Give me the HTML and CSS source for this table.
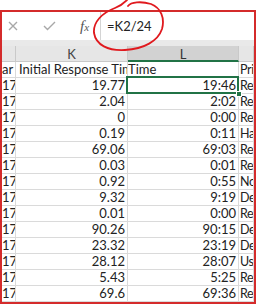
FILE: index.html
```html
<!DOCTYPE html>
<html lang="en">
<head>
    <meta charset="UTF-8">
    <meta name="viewport" content="width=device-width, initial-scale=1.0">
    <title>Response times</title>
    <link rel="stylesheet" href="styles.css">
</head>
<body>
    <!-- hand drawn ring around the formula -->
    <svg class="ring" width="257" height="60" viewBox="0 0 257 60">
        <path d="M128 6 C131 2, 141 1, 151 4 C161 8, 165 18, 162 29 C158 41, 144 49, 125 50 C108 51, 96 45, 94 33 C93 22, 102 13, 115 8 C120 6, 124 3, 127 0"/>
    </svg>

    <div class="sheet">
        <div class="formula-bar">
            <div class="fb-tools">
                <svg class="ico-x" width="10" height="10" viewBox="0 0 10 10"><path d="M1 1 L9 9 M9 1 L1 9"/></svg>
                <svg class="ico-ok" width="13" height="10" viewBox="0 0 13 10"><path d="M1 5 L4.5 8.5 L12 1"/></svg>
                <span class="fx">f<span>x</span></span>
            </div>
            <div class="fb-input">=K2/24</div>
        </div>
        <div class="strip"></div>

        <div class="grid">
            <div class="hd"></div>
            <div class="hd">K</div>
            <div class="hd on">L</div>
            <div class="hd"></div>

            <div class="c">ar</div>
            <div class="c title">Initial Response Time</div>
            <div class="c">Time</div>
            <div class="c side">Pri</div>

            <div class="c">17</div><div class="c num">19.77</div><div class="c num sel">19:46</div><div class="c side">Re</div>
            <div class="c">17</div><div class="c num">2.04</div><div class="c num">2:02</div><div class="c side">Re</div>
            <div class="c">17</div><div class="c num">0</div><div class="c num">0:00</div><div class="c side">Re</div>
            <div class="c">17</div><div class="c num">0.19</div><div class="c num">0:11</div><div class="c side">Ha</div>
            <div class="c">17</div><div class="c num">69.06</div><div class="c num">69:03</div><div class="c side">Re</div>
            <div class="c">17</div><div class="c num">0.03</div><div class="c num">0:01</div><div class="c side">Re</div>
            <div class="c">17</div><div class="c num">0.92</div><div class="c num">0:55</div><div class="c side">No</div>
            <div class="c">17</div><div class="c num">9.32</div><div class="c num">9:19</div><div class="c side">De</div>
            <div class="c">17</div><div class="c num">0.01</div><div class="c num">0:00</div><div class="c side">Re</div>
            <div class="c">17</div><div class="c num">90.26</div><div class="c num">90:15</div><div class="c side">De</div>
            <div class="c">17</div><div class="c num">23.32</div><div class="c num">23:19</div><div class="c side">De</div>
            <div class="c">17</div><div class="c num">28.12</div><div class="c num">28:07</div><div class="c side">Us</div>
            <div class="c">17</div><div class="c num">5.43</div><div class="c num">5:25</div><div class="c side">Re</div>
            <div class="c">17</div><div class="c num">69.6</div><div class="c num">69:36</div><div class="c side">Re</div>
        </div>
    </div>
</body>
</html>
```

FILE: styles.css
```css
body {
    margin: 0;
    background-color: #fff;
    font-family: Lato, "Liberation Sans", sans-serif;
    color: #222;
}
.ring {
    position: absolute;
    left: 0;
    top: 0;
    pointer-events: none;
    z-index: 5;
}
.ring path {
    fill: none;
    stroke: #e0191e;
    stroke-width: 1.8;
    stroke-linecap: round;
}
.sheet {
    margin-top: 10px;
    width: 256px;
    border: 2px solid #d42b2b;
    box-sizing: border-box;
    overflow: hidden;
}
.formula-bar {
    display: flex;
    height: 28px;
    background-color: #fff;
}
.fb-tools {
    width: 98px;
    display: flex;
    align-items: center;
    padding-left: 6px;
    box-sizing: border-box;
}
.fb-tools svg path {
    fill: none;
    stroke: #a8a8a8;
    stroke-width: 1.4;
}
.ico-ok {
    margin-left: 25px;
}
.fx {
    margin-left: 24px;
    font-family: "Liberation Serif", serif;
    font-style: italic;
    font-size: 15px;
    color: #555;
}
.fx span {
    font-size: 11px;
}
.fb-input {
    flex: 1;
    border-left: 1px solid #d4d4d4;
    padding-left: 6px;
    font-size: 13px;
    line-height: 28px;
}
.strip {
    height: 6px;
    background-color: #e9e9e9;
}
.grid {
    display: grid;
    grid-template-columns: 14px 112px 111px 1fr;
    grid-auto-rows: 16px;
}
.hd {
    background-color: #e6e6e6;
    border-right: 1px solid #c9c9c9;
    border-bottom: 1px solid #c9c9c9;
    text-align: center;
    font-size: 13px;
    line-height: 17px;
    color: #444;
}
.hd.on {
    background-color: #d2d2d2;
    border-bottom: 2px solid #217346;
    color: #333;
}
.c {
    border-right: 1px solid #dadada;
    border-bottom: 1px solid #dadada;
    font-size: 13px;
    line-height: 15px;
    padding: 0 2px 0 0;
    white-space: nowrap;
    overflow: hidden;
}
.title {
    padding-left: 3px;
}
.side {
    padding: 0 0 0 1px;
    font-size: 12.5px;
    letter-spacing: -0.3px;
}
.num {
    text-align: right;
}
.sel {
    position: relative;
    overflow: visible;
}
.sel::before {
    content: "";
    position: absolute;
    left: -2px;
    top: -2px;
    right: -1px;
    bottom: -1px;
    border: 2px solid #217346;
}
.sel::after {
    content: "";
    position: absolute;
    right: -4px;
    bottom: -4px;
    width: 4px;
    height: 4px;
    background-color: #217346;
    border: 1px solid #fff;
    z-index: 2;
}
```
